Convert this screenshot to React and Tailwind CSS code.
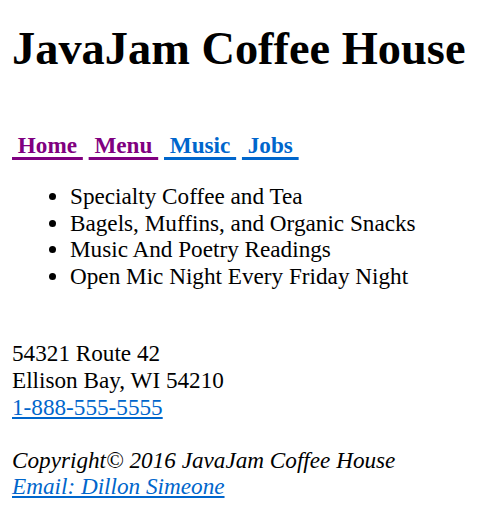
import React from 'react';

const navLinks = [
  { label: 'Home', visited: true },
  { label: 'Menu', visited: true },
  { label: 'Music', visited: false },
  { label: 'Jobs', visited: false },
];

const features = [
  'Specialty Coffee and Tea',
  'Bagels, Muffins, and Organic Snacks',
  'Music And Poetry Readings',
  'Open Mic Night Every Friday Night',
];

export default function App() {
  return (
    <div className="min-h-[528px] bg-white px-[12px] pt-[22px] font-['Liberation_Serif',serif] text-[23.2px] leading-[26.6px] text-black">
      {/* Header */}
      <h1 className="text-[46.4px] font-bold leading-[53px]">JavaJam Coffee House</h1>

      {/* Nav */}
      <nav className="mt-[57px] font-bold">
        {navLinks.map((l, i) => (
          <React.Fragment key={l.label}>
            <a
              href="#"
              className={`underline decoration-[3px] underline-offset-[4px] ${l.visited ? 'text-[#800080]' : 'text-[#0066cc]'}`}
            >
              {'\u00a0' + l.label + '\u00a0'}
            </a>
            {i < navLinks.length - 1 && ' '}
          </React.Fragment>
        ))}
      </nav>

      {/* Features */}
      <ul className="mt-[24.5px] list-disc pl-[58px]">
        {features.map((f) => (
          <li key={f}>{f}</li>
        ))}
      </ul>

      {/* Contact */}
      <div className="mt-[51px]">
        54321 Route 42
        <br />
        Ellison Bay, WI 54210
        <br />
        <a href="#" className="text-[#0066cc] underline">1-888-555-5555</a>
      </div>

      {/* Footer */}
      <footer className="mt-[26.6px] italic">
        Copyright© 2016 JavaJam Coffee House
        <br />
        <a href="#" className="text-[#0066cc] underline">Email: Dillon Simeone</a>
      </footer>
    </div>
  );
}
